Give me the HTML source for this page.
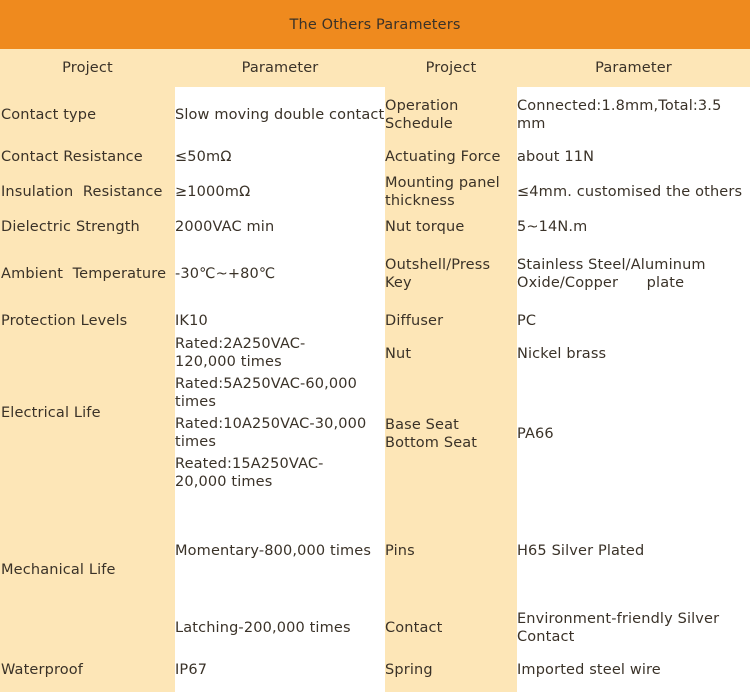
<!DOCTYPE html>
<html><head><meta charset="utf-8"><style>
body{margin:0;width:750px;height:692px;position:relative;overflow:hidden;background:#fff;font-family:"DejaVu Sans","Liberation Sans",sans-serif;font-size:14.5px;color:#3a3228;}
.b{position:absolute;}
.t{position:absolute;line-height:18px;white-space:nowrap;letter-spacing:0.15px;}
.c{text-align:center;}
</style></head><body>
<div class="b" style="left:0;top:0;width:750px;height:49px;background:#ef8a1e"></div>
<div class="b" style="left:0;top:49px;width:750px;height:38px;background:#fde6b7"></div>
<div class="b" style="left:0;top:87px;width:175px;height:605px;background:#fde6b7"></div>
<div class="b" style="left:385px;top:87px;width:132px;height:605px;background:#fde6b7"></div>
<div class="t c" style="left:0;width:750px;top:16px">The Others Parameters</div>
<div class="t c" style="left:0;width:175px;top:59px">Project</div>
<div class="t c" style="left:175px;width:210px;top:59px">Parameter</div>
<div class="t c" style="left:385px;width:132px;top:59px">Project</div>
<div class="t c" style="left:517px;width:233px;top:59px">Parameter</div>

<div class="t" style="left:1px;top:106px">Contact type</div>
<div class="t" style="left:175px;top:106px">Slow moving double contact</div>
<div class="t" style="left:385px;top:97px">Operation<br>Schedule</div>
<div class="t" style="left:517px;top:97px">Connected:1.8mm,Total:3.5<br>mm</div>

<div class="t" style="left:1px;top:148px">Contact Resistance</div>
<div class="t" style="left:175px;top:148px">≤50mΩ</div>
<div class="t" style="left:385px;top:148px">Actuating Force</div>
<div class="t" style="left:517px;top:148px">about 11N</div>

<div class="t" style="left:1px;top:183px">Insulation&nbsp; Resistance</div>
<div class="t" style="left:175px;top:183px">≥1000mΩ</div>
<div class="t" style="left:385px;top:174px">Mounting panel<br>thickness</div>
<div class="t" style="left:517px;top:183px">≤4mm. customised the others</div>

<div class="t" style="left:1px;top:218px">Dielectric Strength</div>
<div class="t" style="left:175px;top:218px">2000VAC min</div>
<div class="t" style="left:385px;top:218px">Nut torque</div>
<div class="t" style="left:517px;top:218px">5~14N.m</div>

<div class="t" style="left:1px;top:265px">Ambient&nbsp; Temperature</div>
<div class="t" style="left:175px;top:265px">-30℃~+80℃</div>
<div class="t" style="left:385px;top:256px">Outshell/Press<br>Key</div>
<div class="t" style="left:517px;top:256px">Stainless Steel/Aluminum<br>Oxide/Copper&nbsp;&nbsp;&nbsp;&nbsp;&nbsp; plate</div>

<div class="t" style="left:1px;top:312px">Protection Levels</div>
<div class="t" style="left:175px;top:312px">IK10</div>
<div class="t" style="left:385px;top:312px">Diffuser</div>
<div class="t" style="left:517px;top:312px">PC</div>

<div class="t" style="left:1px;top:404px">Electrical Life</div>
<div class="t" style="left:175px;top:335px">Rated:2A250VAC-<br>120,000 times</div>
<div class="t" style="left:175px;top:375px">Rated:5A250VAC-60,000<br>times</div>
<div class="t" style="left:175px;top:415px">Rated:10A250VAC-30,000<br>times</div>
<div class="t" style="left:175px;top:455px">Reated:15A250VAC-<br>20,000 times</div>
<div class="t" style="left:385px;top:345px">Nut</div>
<div class="t" style="left:517px;top:345px">Nickel brass</div>
<div class="t" style="left:385px;top:416px">Base Seat<br>Bottom Seat</div>
<div class="t" style="left:517px;top:425px">PA66</div>

<div class="t" style="left:1px;top:561px">Mechanical Life</div>
<div class="t" style="left:175px;top:542px">Momentary-800,000 times</div>
<div class="t" style="left:385px;top:542px">Pins</div>
<div class="t" style="left:517px;top:542px">H65 Silver Plated</div>

<div class="t" style="left:175px;top:619px">Latching-200,000 times</div>
<div class="t" style="left:385px;top:619px">Contact</div>
<div class="t" style="left:517px;top:610px">Environment-friendly Silver<br>Contact</div>

<div class="t" style="left:1px;top:661px">Waterproof</div>
<div class="t" style="left:175px;top:661px">IP67</div>
<div class="t" style="left:385px;top:661px">Spring</div>
<div class="t" style="left:517px;top:661px">Imported steel wire</div>
</body></html>
